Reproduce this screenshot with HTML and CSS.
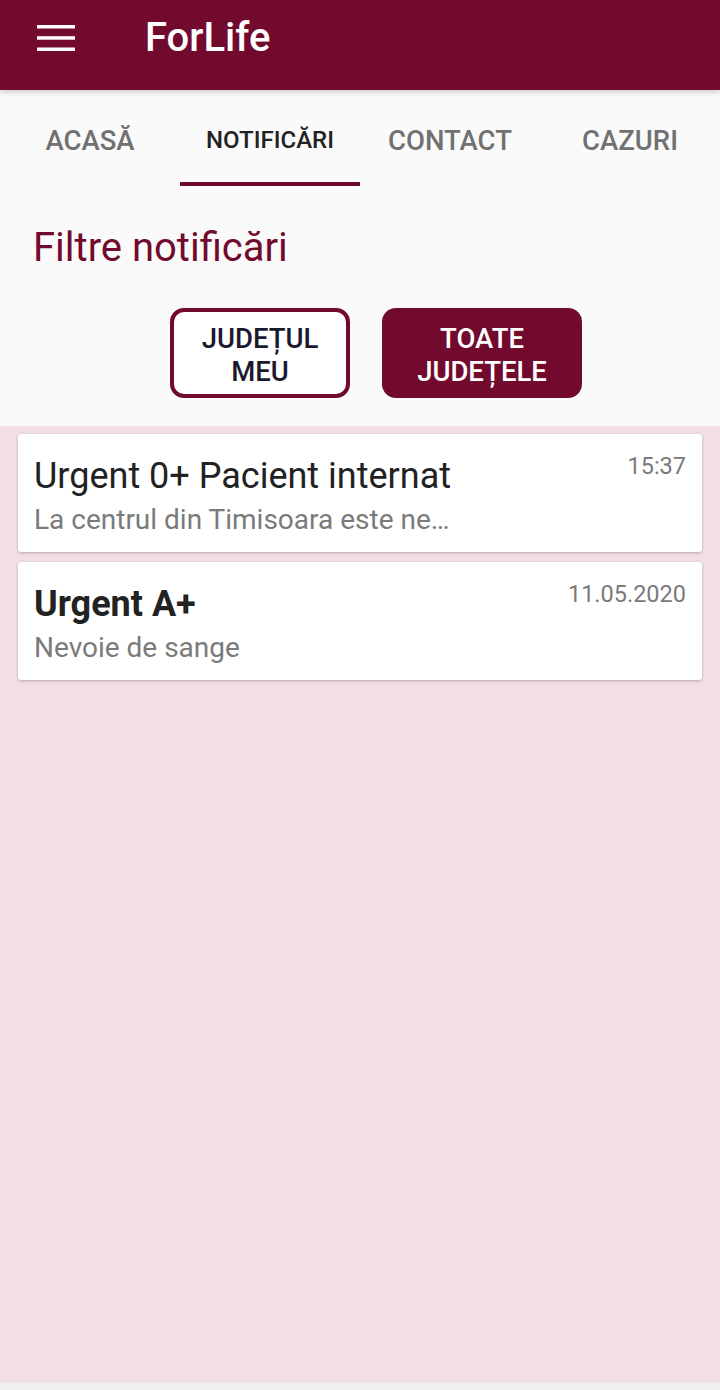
FILE: index.html
```html
<!DOCTYPE html>
<html lang="ro">
<head>
<meta charset="utf-8">
<link rel="stylesheet" href="styles.css">
</head>
<body>
<div class="screen">
  <header class="appbar">
    <button class="menu" aria-label="menu">
      <svg width="38" height="26" viewBox="0 0 38 26"><rect x="0" y="0" width="38" height="3.5" fill="#fff"/><rect x="0" y="11.2" width="38" height="3.5" fill="#fff"/><rect x="0" y="22.5" width="38" height="3.5" fill="#fff"/></svg>
    </button>
    <h1 class="title">ForLife</h1>
  </header>
  <nav class="tabs">
    <div class="tab">ACASĂ</div>
    <div class="tab active">NOTIFICĂRI</div>
    <div class="tab">CONTACT</div>
    <div class="tab">CAZURI</div>
  </nav>
  <section class="filters">
    <h2 class="filters-title">Filtre notificări</h2>
    <div class="filter-buttons">
      <button class="fbtn outline">JUDEȚUL<br>MEU</button>
      <button class="fbtn filled">TOATE<br>JUDEȚELE</button>
    </div>
  </section>
  <main class="list">
    <article class="card">
      <div class="card-text">
        <div class="card-title">Urgent 0+ Pacient internat</div>
        <div class="card-sub">La centrul din Timisoara este ne…</div>
      </div>
      <div class="card-time">15:37</div>
    </article>
    <article class="card">
      <div class="card-text">
        <div class="card-title bold">Urgent A+</div>
        <div class="card-sub">Nevoie de sange</div>
      </div>
      <div class="card-time">11.05.2020</div>
    </article>
  </main>
  <div class="navstrip"></div>
</div>
</body>
</html>
```

FILE: styles.css
```css
* { box-sizing: border-box; }
html, body { margin: 0; padding: 0; }
body {
  font-family: Roboto, "Noto Sans", sans-serif;
  background: #efefef;
}
.screen {
  width: 720px;
  height: 1390px;
  display: flex;
  flex-direction: column;
}
.appbar {
  height: 90px;
  background: #720a2e;
  display: flex;
  align-items: center;
  position: relative;
  z-index: 2;
  box-shadow: 0 2px 6px rgba(0,0,0,0.2);
}
.menu {
  background: none;
  border: 0;
  padding: 0;
  margin: 0 0 14px 37px;
  width: 38px;
  height: 26px;
  display: flex;
}
.title {
  margin: 0 0 16px 70px;
  color: #fff;
  font-size: 40px;
  font-weight: 500;
  letter-spacing: 0;
}
.tabs {
  height: 96px;
  background: #fafafa;
  display: grid;
  grid-template-columns: repeat(4, 180px);
}
.tab {
  display: flex;
  align-items: center;
  justify-content: center;
  font-size: 27.5px;
  font-weight: 500;
  color: #717171;
  padding-top: 8px;
  border-bottom: 4px solid transparent;
}
.tab.active {
  color: #222;
  font-size: 24px;
  border-bottom-color: #720a2e;
}
.filters {
  background: #fafafa;
  padding: 0 0 28px 0;
}
.filters-title {
  margin: 0;
  padding: 40px 0 0 33px;
  font-size: 40px;
  font-weight: 400;
  color: #720a2e;
  line-height: 44px;
}
.filter-buttons {
  display: flex;
  justify-content: center;
  gap: 32px;
  margin-top: 38px;
  padding-left: 32px;
}
.fbtn {
  height: 90px;
  border-radius: 14px;
  font-family: Roboto, sans-serif;
  font-size: 27.5px;
  font-weight: 500;
  line-height: 33px;
  padding: 4px 0 0 0;
}
.fbtn.outline {
  width: 180px;
  background: #fff;
  border: 4px solid #720a2e;
  color: #1a1a2e;
}
.fbtn.filled {
  width: 200px;
  background: #720a2e;
  border: 0;
  color: #fff;
}
.list {
  flex: 1;
  background: #f2dfe5;
  padding: 8px 18px;
  display: flex;
  flex-direction: column;
  gap: 10px;
}
.card {
  background: #fff;
  height: 118px;
  border-radius: 3px;
  box-shadow: 0 1px 3px rgba(0,0,0,0.25);
  display: flex;
  justify-content: space-between;
  padding: 18px 16px 0 16px;
}
.card-title {
  font-size: 36px;
  color: #222;
  line-height: 48px;
}
.card-title.bold { font-weight: 700; }
.card-sub {
  font-size: 28px;
  color: #7a7a7a;
  line-height: 34px;
  margin-top: 3px;
}
.card-time {
  font-size: 23.5px;
  line-height: 28px;
  color: #7a7a7a;
}
.navstrip {
  height: 7px;
  background: #efefef;
}
```
